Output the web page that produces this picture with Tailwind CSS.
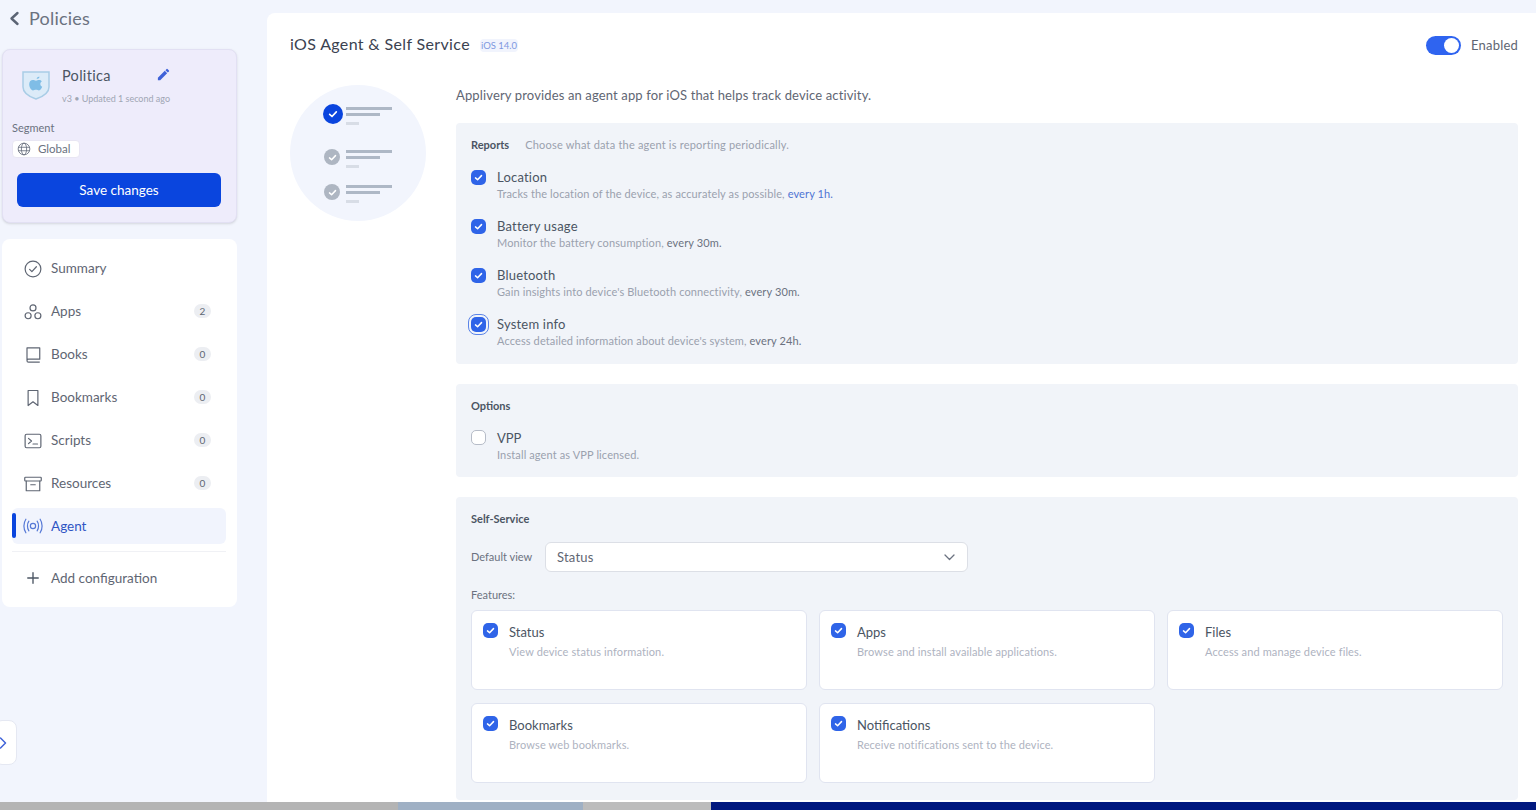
<!DOCTYPE html>
<html lang="en">

<head>
    <meta charset="UTF-8">
    <meta name="viewport" content="width=device-width, initial-scale=1.0">
    <script src="https://cdn.jsdelivr.net/npm/@tailwindcss/browser@4"></script>
    <title>Policies - iOS Agent</title>
</head>

<body class="h-screen overflow-hidden flex flex-col bg-[#f2f5fd] font-['Lato',sans-serif] text-[#4b5563]">

    <div class="relative flex h-[802px] shrink-0">
        <!-- sidebar -->
        <aside class="w-[267px] shrink-0 pl-[2px] pr-[30px]">
            <div class="h-[49px] pt-[5px] pl-[6px] flex items-start gap-[9px]">
                <svg class="w-[12px] h-[26px]" viewBox="0 0 12 26" fill="none" stroke="#5b6474" stroke-width="2.4" stroke-linecap="round" stroke-linejoin="round"><path d="M9.5 8 3.5 13.5 9.5 19" /></svg>
                <span class="text-[18px] leading-[26px] text-[#6b7280] tracking-[0.2px]">Policies</span>
            </div>

            <div class="h-[174px] rounded-lg border border-[#e2e0f3] bg-[#eeecfb] shadow-sm pt-[15px]">
                <div class="flex pl-[18px]">
                    <svg class="w-[30px] h-[32px] mt-[4px]" viewBox="0 0 30 32">
                        <path d="M2 3h26v15c0 6-7 10-13 12C9 28 2 24 2 18z" fill="#dcebf8" stroke="#a9cde6" stroke-width="1.5" />
                        <path d="M15.5 9.5c1-1.4 2-1.7 3-1.7-.1 1.300-1 2.500-3 1.700zM11.800 11c1.200 0 2.200.7 3.200.7s1.900-.7 3.200-.7c1.100 0 2 .5 2.600 1.400-2.200 1.400-1.800 4.400.4 5.300-.6 1.700-1.900 3.700-3.200 3.700-1 0-1.500-.6-3-.6s-2 .6-3 .6c-1.700 0-3.800-3.400-3.800-6.200 0-2.700 1.700-4.200 3.600-4.200z" fill="#7fbde6" />
                    </svg>
                    <div class="ml-[11px] w-[109px]">
                        <div class="flex items-center justify-between h-[22px]">
                            <span class="text-[14.500px] text-[#4b5563] tracking-[0.3px]">Politica</span>
                            <svg class="w-[15px] h-[15px] -mt-[3px]" viewBox="0 0 24 24" fill="#3f62d8"><path d="M3 17.250V21h3.750L17.810 9.940l-3.750-3.750L3 17.250zM20.710 7.040a1 1 0 0 0 0-1.410l-2.340-2.340a1 1 0 0 0-1.410 0l-1.830 1.830 3.750 3.750 1.830-1.830z" /></svg>
                        </div>
                        <div class="mt-[5px] text-[9px] leading-[14px] text-[#a0a6b4] whitespace-nowrap">v3 • Updated 1 second ago</div>
                    </div>
                </div>
                <div class="pl-[9px] mt-[15px] text-[11px] leading-[14px] text-[#6b7280]">Segment</div>
                <div class="ml-[9px] mt-[5px] w-[68px] h-[18px] rounded border border-[#e8e6f3] bg-white flex items-center pl-[4px] gap-[7px]">
                    <svg class="w-[14px] h-[14px]" viewBox="0 0 24 24" fill="none" stroke="#6b7280" stroke-width="1.500"><circle cx="12" cy="12" r="10" /><ellipse cx="12" cy="12" rx="4.500" ry="10" /><path d="M2 9h20M2 15h20" /></svg>
                    <span class="text-[11.500px] text-[#6b7280]">Global</span>
                </div>
                <button class="block ml-[14px] mt-[15px] w-[204px] h-[34px] rounded-md bg-[#0a45de] text-white text-[13.500px]">Save changes</button>
            </div>

            <nav class="mt-[16px] h-[368px] rounded-lg bg-white pl-[10px] pr-[11px] pt-[8px] text-[13.500px] text-[#5f6673]">
                <a class="h-[43px] flex items-center pl-[12px]">
                    <svg class="w-[18px] h-[18px]" viewBox="0 0 24 24" fill="none" stroke="#5f6673" stroke-width="1.600" stroke-linecap="round" stroke-linejoin="round"><circle cx="12" cy="12" r="10.500" /><path d="m7.500 12.500 3 3 6-6.500" /></svg>
                    <span class="ml-[9px] flex-1">Summary</span>
                </a>
                <a class="h-[43px] flex items-center pl-[12px] pr-[15px]">
                    <svg class="w-[18px] h-[18px]" viewBox="0 0 24 24" fill="none" stroke="#5f6673" stroke-width="1.600"><circle cx="12" cy="6.500" r="4" /><circle cx="5.500" cy="17" r="4" /><circle cx="18.500" cy="17" r="4" /></svg>
                    <span class="ml-[9px] flex-1">Apps</span>
                    <span class="mb-[2px] w-[17px] h-[14px] rounded-full bg-[#eceef2] text-[10px] leading-[14px] text-center">2</span>
                </a>
                <a class="h-[43px] flex items-center pl-[12px] pr-[15px]">
                    <svg class="w-[18px] h-[18px]" viewBox="0 0 24 24" fill="none" stroke="#5f6673" stroke-width="1.600" stroke-linejoin="round"><path d="M4 19V2.500h17v15H6a2 2 0 0 0-2 2 2 2 0 0 0 2 2h15" /></svg>
                    <span class="ml-[9px] flex-1">Books</span>
                    <span class="mb-[2px] w-[17px] h-[14px] rounded-full bg-[#eceef2] text-[10px] leading-[14px] text-center">0</span>
                </a>
                <a class="h-[43px] flex items-center pl-[12px] pr-[15px]">
                    <svg class="w-[18px] h-[18px]" viewBox="0 0 24 24" fill="none" stroke="#5f6673" stroke-width="1.600" stroke-linejoin="round"><path d="M5.500 2h13v20l-6.500-5-6.500 5z" /></svg>
                    <span class="ml-[9px] flex-1">Bookmarks</span>
                    <span class="mb-[2px] w-[17px] h-[14px] rounded-full bg-[#eceef2] text-[10px] leading-[14px] text-center">0</span>
                </a>
                <a class="h-[43px] flex items-center pl-[12px] pr-[15px]">
                    <svg class="w-[18px] h-[18px]" viewBox="0 0 24 24" fill="none" stroke="#5f6673" stroke-width="1.600" stroke-linecap="round" stroke-linejoin="round"><rect x="1.500" y="3" width="21" height="18" rx="2" /><path d="m6 8.500 4 3.500-4 3.500M12 16h6" /></svg>
                    <span class="ml-[9px] flex-1">Scripts</span>
                    <span class="mb-[2px] w-[17px] h-[14px] rounded-full bg-[#eceef2] text-[10px] leading-[14px] text-center">0</span>
                </a>
                <a class="h-[43px] flex items-center pl-[12px] pr-[15px]">
                    <svg class="w-[18px] h-[18px]" viewBox="0 0 24 24" fill="none" stroke="#5f6673" stroke-width="1.600" stroke-linecap="round" stroke-linejoin="round"><rect x="1" y="3" width="22" height="5" rx="1" /><path d="M3 8v13h18V8M9 13h6" /></svg>
                    <span class="ml-[9px] flex-1">Resources</span>
                    <span class="mb-[2px] w-[17px] h-[14px] rounded-full bg-[#eceef2] text-[10px] leading-[14px] text-center">0</span>
                </a>
                <a class="relative h-[36px] mt-[3px] rounded-md bg-[#f1f4fd] flex items-center pl-[11px] text-[#2f55c4]">
                    <span class="absolute left-0 top-[5px] w-[4px] h-[25px] rounded-sm bg-[#0a45de]"></span>
                    <svg class="w-[20px] h-[18px]" viewBox="0 0 26 24" fill="none" stroke="#5578d6" stroke-width="1.600" stroke-linecap="round"><circle cx="13" cy="12" r="3.500" /><path d="M7.500 5.500c-2.500 3.500-2.500 9.500 0 13M18.500 5.500c2.500 3.500 2.500 9.500 0 13M3.500 3c-3.500 5-3.500 13 0 18M22.500 3c3.500 5 3.500 13 0 18" /></svg>
                    <span class="ml-[8px]">Agent</span>
                </a>
                <div class="mt-[7px] border-t border-[#f0f1f5]"></div>
                <a class="h-[52px] flex items-center pl-[12px]">
                    <svg class="w-[18px] h-[18px]" viewBox="0 0 24 24" fill="none" stroke="#4b5563" stroke-width="1.800" stroke-linecap="round"><path d="M12 5v14M5 12h14" /></svg>
                    <span class="ml-[9px]">Add configuration</span>
                </a>
            </nav>
        </aside>

        <button class="absolute left-[-6px] top-[720px] w-[23px] h-[45px] rounded-lg border border-[#e5e8f2] bg-white flex items-center justify-end pr-[9px]">
            <svg class="w-[8px] h-[14px]" viewBox="0 0 8 14" fill="none" stroke="#3f62d8" stroke-width="1.500" stroke-linecap="round" stroke-linejoin="round"><path d="m1.500 2 5 5-5 5" /></svg>
        </button>

        <!-- main panel -->
        <main class="flex-1 mt-[13px] rounded-tl-lg bg-white pl-[23px] pr-[18px] overflow-hidden">
            <header class="h-[64px] flex items-center justify-between">
                <div class="flex items-center mb-[2px]">
                    <h1 class="text-[16px] text-[#3b4250] tracking-[0.35px]">iOS Agent &amp; Self Service</h1>
                    <span class="ml-[10px] mt-[2px] px-[1px] rounded bg-[#f1f4fd] text-[9.500px] leading-[13px] text-[#7e98e0]">iOS 14.0</span>
                </div>
                <div class="flex items-center mt-[1px]">
                    <span class="relative w-[35px] h-[19px] rounded-full bg-[#2f64f0]">
                        <span class="absolute right-[2px] top-[2px] w-[15px] h-[15px] rounded-full bg-white"></span>
                    </span>
                    <span class="ml-[10px] text-[13px] text-[#5f6673] tracking-[0.2px]">Enabled</span>
                </div>
            </header>

            <div class="flex items-start">
                <!-- illustration -->
                <div class="w-[136px] h-[136px] mt-[8px] shrink-0 rounded-full bg-[#f2f5fd] pl-[33px] pt-[19px]">
                    <div class="h-[44px] flex">
                        <span class="w-[20px] h-[20px] rounded-full bg-[#0a45de] flex items-center justify-center">
                            <svg class="w-[10px] h-[10px]" viewBox="0 0 12 12" fill="none" stroke="#fff" stroke-width="2" stroke-linecap="round" stroke-linejoin="round"><path d="m2 6.500 2.800 2.500L10 3.500" /></svg>
                        </span>
                        <div class="ml-[3px] pt-[3px]">
                            <div class="w-[46px] h-[3px] bg-[#aeb8c6]"></div>
                            <div class="mt-[3px] w-[34px] h-[3px] bg-[#aeb8c6]"></div>
                            <div class="mt-[6px] w-[13px] h-[3px] bg-[#d8dde6]"></div>
                        </div>
                    </div>
                    <div class="h-[36px] flex pt-[1px]">
                        <span class="w-[16px] h-[16px] ml-[1px] rounded-full bg-[#aeb6c2] flex items-center justify-center">
                            <svg class="w-[9px] h-[9px]" viewBox="0 0 12 12" fill="none" stroke="#fff" stroke-width="2" stroke-linecap="round" stroke-linejoin="round"><path d="m2 6.500 2.800 2.500L10 3.500" /></svg>
                        </span>
                        <div class="ml-[6px] pt-[1px]">
                            <div class="w-[46px] h-[3px] bg-[#aeb8c6]"></div>
                            <div class="mt-[3px] w-[34px] h-[3px] bg-[#aeb8c6]"></div>
                            <div class="mt-[6px] w-[13px] h-[3px] bg-[#d8dde6]"></div>
                        </div>
                    </div>
                    <div class="flex">
                        <span class="w-[16px] h-[16px] ml-[1px] rounded-full bg-[#aeb6c2] flex items-center justify-center">
                            <svg class="w-[9px] h-[9px]" viewBox="0 0 12 12" fill="none" stroke="#fff" stroke-width="2" stroke-linecap="round" stroke-linejoin="round"><path d="m2 6.500 2.800 2.500L10 3.500" /></svg>
                        </span>
                        <div class="ml-[6px] pt-[1px]">
                            <div class="w-[46px] h-[3px] bg-[#aeb8c6]"></div>
                            <div class="mt-[3px] w-[34px] h-[3px] bg-[#aeb8c6]"></div>
                            <div class="mt-[6px] w-[13px] h-[3px] bg-[#d8dde6]"></div>
                        </div>
                    </div>
                </div>

                <div class="ml-[30px] flex-1 min-w-0">
                    <p class="h-[31px] pt-[9px] text-[13px] leading-[18px] text-[#5f6673] tracking-[0.14px]">Applivery provides an agent app for iOS that helps track device activity.</p>

                    <!-- reports -->
                    <section class="mt-[15px] h-[241px] rounded bg-[#f1f4f9] pl-[15px] pt-[15px]">
                        <div class="flex items-baseline text-[11px] leading-[14px]">
                            <b class="font-bold text-[#4b5563]">Reports</b>
                            <span class="ml-[16px] text-[#9aa1ae] tracking-[0.2px]">Choose what data the agent is reporting periodically.</span>
                        </div>
                        <div class="mt-[16px] flex flex-col gap-[15px]">
                            <label class="h-[34px] flex">
                                <span class="w-[15px] h-[15px] mt-[2px] rounded-[5px] bg-[#2f64e8] flex items-center justify-center"><svg class="w-[9px] h-[9px]" viewBox="0 0 12 12" fill="none" stroke="#fff" stroke-width="2" stroke-linecap="round" stroke-linejoin="round"><path d="m2 6.500 2.800 2.500L10 3.500" /></svg></span>
                                <span class="ml-[11px]">
                                    <span class="block text-[13px] leading-[18px] text-[#4b5563] tracking-[0.2px]">Location</span>
                                    <span class="block text-[11px] leading-[16px] text-[#9aa1ae] tracking-[0.12px]">Tracks the location of the device, as accurately as possible, <span class="text-[#4f74d4]">every 1h.</span></span>
                                </span>
                            </label>
                            <label class="h-[34px] flex">
                                <span class="w-[15px] h-[15px] mt-[2px] rounded-[5px] bg-[#2f64e8] flex items-center justify-center"><svg class="w-[9px] h-[9px]" viewBox="0 0 12 12" fill="none" stroke="#fff" stroke-width="2" stroke-linecap="round" stroke-linejoin="round"><path d="m2 6.500 2.800 2.500L10 3.500" /></svg></span>
                                <span class="ml-[11px]">
                                    <span class="block text-[13px] leading-[18px] text-[#4b5563] tracking-[0.2px]">Battery usage</span>
                                    <span class="block text-[11px] leading-[16px] text-[#9aa1ae] tracking-[0.12px]">Monitor the battery consumption, <span class="text-[#6b7280]">every 30m.</span></span>
                                </span>
                            </label>
                            <label class="h-[34px] flex">
                                <span class="w-[15px] h-[15px] mt-[2px] rounded-[5px] bg-[#2f64e8] flex items-center justify-center"><svg class="w-[9px] h-[9px]" viewBox="0 0 12 12" fill="none" stroke="#fff" stroke-width="2" stroke-linecap="round" stroke-linejoin="round"><path d="m2 6.500 2.800 2.500L10 3.500" /></svg></span>
                                <span class="ml-[11px]">
                                    <span class="block text-[13px] leading-[18px] text-[#4b5563] tracking-[0.2px]">Bluetooth</span>
                                    <span class="block text-[11px] leading-[16px] text-[#9aa1ae] tracking-[0.12px]">Gain insights into device's Bluetooth connectivity, <span class="text-[#6b7280]">every 30m.</span></span>
                                </span>
                            </label>
                            <label class="h-[34px] flex">
                                <span class="w-[15px] h-[15px] mt-[2px] rounded-[5px] bg-[#2f64e8] outline outline-offset-2 outline-[#5b84e8] flex items-center justify-center"><svg class="w-[9px] h-[9px]" viewBox="0 0 12 12" fill="none" stroke="#fff" stroke-width="2" stroke-linecap="round" stroke-linejoin="round"><path d="m2 6.500 2.800 2.500L10 3.500" /></svg></span>
                                <span class="ml-[11px]">
                                    <span class="block text-[13px] leading-[18px] text-[#4b5563] tracking-[0.2px]">System info</span>
                                    <span class="block text-[11px] leading-[16px] text-[#9aa1ae] tracking-[0.12px]">Access detailed information about device's system, <span class="text-[#6b7280]">every 24h.</span></span>
                                </span>
                            </label>
                        </div>
                    </section>

                    <!-- options -->
                    <section class="mt-[20px] h-[93px] rounded bg-[#f1f4f9] pl-[15px] pt-[15px]">
                        <b class="block text-[11px] leading-[14px] font-bold text-[#4b5563]">Options</b>
                        <label class="mt-[16px] flex">
                            <span class="w-[15px] h-[15px] mt-[1px] rounded-[5px] border border-[#b6bcc8] bg-white"></span>
                            <span class="ml-[11px]">
                                <span class="block text-[13px] leading-[18px] text-[#4b5563]">VPP</span>
                                <span class="block text-[11px] leading-[16px] text-[#9aa1ae] tracking-[0.12px]">Install agent as VPP licensed.</span>
                            </span>
                        </label>
                    </section>

                    <!-- self service -->
                    <section class="mt-[20px] h-[303px] rounded bg-[#f1f4f9] pl-[15px] pr-[15px] pt-[15px]">
                        <b class="block text-[11px] leading-[14px] font-bold text-[#4b5563]">Self-Service</b>
                        <div class="mt-[16px] flex items-center">
                            <span class="w-[74px] text-[11px] text-[#6b7280]">Default view</span>
                            <div class="w-[423px] h-[30px] pt-[1px] rounded-md border border-[#dcdfe6] bg-white flex items-center justify-between pl-[11px] pr-[12px]">
                                <span class="text-[13px] text-[#5f6673] tracking-[0.2px]">Status</span>
                                <svg class="w-[11px] h-[7px]" viewBox="0 0 11 7" fill="none" stroke="#6b7280" stroke-width="1.300" stroke-linecap="round" stroke-linejoin="round"><path d="m1 1 4.500 4.500L10 1" /></svg>
                            </div>
                        </div>
                        <div class="mt-[16px] text-[11px] leading-[14px] text-[#6b7280]">Features:</div>
                        <div class="mt-[8px] grid grid-cols-3 gap-x-[12px] gap-y-[13px] auto-rows-[80px]">
                            <label class="flex rounded-md border border-[#e0e4f0] bg-white pl-[11px] pt-[12px]">
                                <span class="w-[15px] h-[15px] shrink-0 rounded-[5px] bg-[#2f64e8] flex items-center justify-center"><svg class="w-[9px] h-[9px]" viewBox="0 0 12 12" fill="none" stroke="#fff" stroke-width="2" stroke-linecap="round" stroke-linejoin="round"><path d="m2 6.500 2.800 2.500L10 3.500" /></svg></span>
                                <span class="ml-[11px]">
                                    <span class="block text-[13px] leading-[18px] text-[#4b5563]">Status</span>
                                    <span class="block mt-[4px] text-[11px] leading-[14px] text-[#aeb3bf] tracking-[0.12px]">View device status information.</span>
                                </span>
                            </label>
                            <label class="flex rounded-md border border-[#e0e4f0] bg-white pl-[11px] pt-[12px]">
                                <span class="w-[15px] h-[15px] shrink-0 rounded-[5px] bg-[#2f64e8] flex items-center justify-center"><svg class="w-[9px] h-[9px]" viewBox="0 0 12 12" fill="none" stroke="#fff" stroke-width="2" stroke-linecap="round" stroke-linejoin="round"><path d="m2 6.500 2.800 2.500L10 3.500" /></svg></span>
                                <span class="ml-[11px]">
                                    <span class="block text-[13px] leading-[18px] text-[#4b5563]">Apps</span>
                                    <span class="block mt-[4px] text-[11px] leading-[14px] text-[#aeb3bf] tracking-[0.12px]">Browse and install available applications.</span>
                                </span>
                            </label>
                            <label class="flex rounded-md border border-[#e0e4f0] bg-white pl-[11px] pt-[12px]">
                                <span class="w-[15px] h-[15px] shrink-0 rounded-[5px] bg-[#2f64e8] flex items-center justify-center"><svg class="w-[9px] h-[9px]" viewBox="0 0 12 12" fill="none" stroke="#fff" stroke-width="2" stroke-linecap="round" stroke-linejoin="round"><path d="m2 6.500 2.800 2.500L10 3.500" /></svg></span>
                                <span class="ml-[11px]">
                                    <span class="block text-[13px] leading-[18px] text-[#4b5563]">Files</span>
                                    <span class="block mt-[4px] text-[11px] leading-[14px] text-[#aeb3bf] tracking-[0.12px]">Access and manage device files.</span>
                                </span>
                            </label>
                            <label class="flex rounded-md border border-[#e0e4f0] bg-white pl-[11px] pt-[12px]">
                                <span class="w-[15px] h-[15px] shrink-0 rounded-[5px] bg-[#2f64e8] flex items-center justify-center"><svg class="w-[9px] h-[9px]" viewBox="0 0 12 12" fill="none" stroke="#fff" stroke-width="2" stroke-linecap="round" stroke-linejoin="round"><path d="m2 6.500 2.800 2.500L10 3.500" /></svg></span>
                                <span class="ml-[11px]">
                                    <span class="block text-[13px] leading-[18px] text-[#4b5563]">Bookmarks</span>
                                    <span class="block mt-[4px] text-[11px] leading-[14px] text-[#aeb3bf] tracking-[0.12px]">Browse web bookmarks.</span>
                                </span>
                            </label>
                            <label class="flex rounded-md border border-[#e0e4f0] bg-white pl-[11px] pt-[12px]">
                                <span class="w-[15px] h-[15px] shrink-0 rounded-[5px] bg-[#2f64e8] flex items-center justify-center"><svg class="w-[9px] h-[9px]" viewBox="0 0 12 12" fill="none" stroke="#fff" stroke-width="2" stroke-linecap="round" stroke-linejoin="round"><path d="m2 6.500 2.800 2.500L10 3.500" /></svg></span>
                                <span class="ml-[11px]">
                                    <span class="block text-[13px] leading-[18px] text-[#4b5563]">Notifications</span>
                                    <span class="block mt-[4px] text-[11px] leading-[14px] text-[#aeb3bf] tracking-[0.12px]">Receive notifications sent to the device.</span>
                                </span>
                            </label>
                        </div>
                    </section>
                </div>
            </div>
        </main>
    </div>

    <!-- strip of the window behind -->
    <div class="h-[8px] shrink-0 flex">
        <div class="w-[398px] bg-[#b4b4b4]"></div>
        <div class="w-[185px] bg-[#9fb0c4]"></div>
        <div class="w-[128px] bg-[#bcbcbc]"></div>
        <div class="flex-1 bg-[#02197f]"></div>
    </div>

</body>

</html>
